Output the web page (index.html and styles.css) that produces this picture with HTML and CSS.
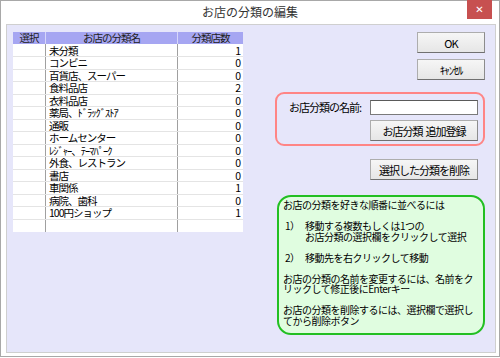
FILE: index.html
```html
<!DOCTYPE html>
<html lang="ja">
<head>
    <meta charset="UTF-8">
    <meta name="viewport" content="width=device-width, initial-scale=1.0">
    <title>お店の分類の編集</title>
    <link rel="stylesheet" href="styles.css">
</head>
<body>
    <div class="window">
        <div class="titlebar">
            <span class="title">お店の分類の編集</span>
            <button class="close-button">&#x2715;</button>
        </div>

        <div class="client">
            <table class="grid">
                <thead>
                    <tr>
                        <th class="col-select">選択</th>
                        <th class="col-name">お店の分類名</th>
                        <th class="col-count">分類店数</th>
                    </tr>
                </thead>
                <tbody>
                    <tr><td></td><td>未分類</td><td class="num">1</td></tr>
                    <tr><td></td><td>コンビニ</td><td class="num">0</td></tr>
                    <tr><td></td><td>百貨店、スーパー</td><td class="num">0</td></tr>
                    <tr><td></td><td>食料品店</td><td class="num">2</td></tr>
                    <tr><td></td><td>衣料品店</td><td class="num">0</td></tr>
                    <tr><td></td><td>薬局、ﾄﾞﾗｯｸﾞｽﾄｱ</td><td class="num">0</td></tr>
                    <tr><td></td><td>通販</td><td class="num">0</td></tr>
                    <tr><td></td><td>ホームセンター</td><td class="num">0</td></tr>
                    <tr><td></td><td>ﾚｼﾞｬｰ、ﾃｰﾏﾊﾟｰｸ</td><td class="num">0</td></tr>
                    <tr><td></td><td>外食、レストラン</td><td class="num">0</td></tr>
                    <tr><td></td><td>書店</td><td class="num">0</td></tr>
                    <tr><td></td><td>車関係</td><td class="num">1</td></tr>
                    <tr><td></td><td>病院、歯科</td><td class="num">0</td></tr>
                    <tr><td></td><td>100円ショップ</td><td class="num">1</td></tr>
                    <tr class="empty-row"><td></td><td></td><td></td></tr>
                </tbody>
            </table>

            <div class="side">
                <div class="main-buttons">
                    <button class="btn btn-small">OK</button>
                    <button class="btn btn-small">ｷｬﾝｾﾙ</button>
                </div>

                <div class="name-box">
                    <div class="name-row">
                        <label for="nameInput">お店分類の名前:</label>
                        <input type="text" id="nameInput">
                    </div>
                    <button class="btn btn-wide">お店分類&nbsp;&nbsp;追加登録</button>
                </div>

                <button class="btn btn-wide btn-delete">選択した分類を削除</button>

                <div class="help-box">
                    <p>お店の分類を好きな順番に並べるには</p>
                    <p class="step"><span class="step-no">1）</span><span>移動する複数もしくは1つの<br>お店分類の選択欄をクリックして選択</span></p>
                    <p class="step"><span class="step-no">2）</span><span>移動先を右クリックして移動</span></p>
                    <p>お店の分類の名前を変更するには、名前をク<br>リックして修正後にEnterキー</p>
                    <p>お店の分類を削除するには、選択欄で選択し<br>てから削除ボタン</p>
                </div>
            </div>
        </div>
    </div>
</body>
</html>
```

FILE: styles.css
```css
body {
    margin: 0;
    padding: 0;
    background-color: #ffffff;
    font-family: "Noto Sans CJK JP", "Noto Sans", sans-serif;
    font-size: 11px;
    color: #000000;
}

.window {
    box-sizing: border-box;
    width: 500px;
    height: 357px;
    border: 1px solid #a8a8a8;
    background-color: #ffffff;
    display: flex;
    flex-direction: column;
}

.titlebar {
    position: relative;
    height: 23px;
    text-align: center;
}

.title {
    display: inline-block;
    margin-top: 3px;
    font-size: 12px;
    line-height: 16px;
    color: #333333;
}

.close-button {
    position: absolute;
    top: -1px;
    right: 7px;
    width: 25px;
    height: 19px;
    padding: 0;
    border: none;
    background-color: #c75050;
    color: #ffffff;
    font-size: 10px;
    line-height: 19px;
    font-weight: bold;
    font-family: "DejaVu Sans", sans-serif;
}

.client {
    box-sizing: border-box;
    height: 329px;
    margin: 0 3px 0 5px;
    padding: 7px 0 0 6px;
    border: 1px solid #cfcfcf;
    background-color: #e6e6fa;
    display: flex;
    align-items: flex-start;
    gap: 32px;
    letter-spacing: -1px;
}

/* tabela */
.grid {
    width: 228px;
    border-collapse: collapse;
    table-layout: fixed;
    background-color: #ffffff;
}

.grid th {
    height: 12px;
    padding: 0;
    background-color: #a6a6f2;
    font-weight: normal;
    font-size: 10.5px;
    line-height: 12px;
    color: #202020;
    border-left: 1px solid #d6d6fa;
}

.grid th:first-child {
    border-left: none;
}

.col-select {
    width: 32px;
}

.col-name {
    width: 131px;
}

.col-count {
    width: 65px;
}

.grid td {
    height: 12.5px;
    padding: 0 3px;
    font-size: 10.5px;
    line-height: 11px;
    box-sizing: border-box;
    border-bottom: 1px solid #e4e4e4;
    border-left: 1px solid #a0a0a0;
    white-space: nowrap;
}

.grid td:first-child {
    border-left: none;
}

.grid td.num {
    text-align: right;
    padding-right: 3px;
}

.grid .empty-row td {
    border-bottom: none;
}

/* lado direito */
.side {
    width: 210px;
    display: flex;
    flex-direction: column;
    align-items: flex-start;
}

.main-buttons {
    align-self: flex-end;
    display: flex;
    flex-direction: column;
    gap: 6px;
}

.btn {
    box-sizing: border-box;
    height: 21px;
    padding: 0;
    border: 1px solid #adadad;
    border-right-color: #8c8c8c;
    border-bottom-color: #707070;
    background: linear-gradient(#f6f6f6, #e6e6e6);
    font-family: inherit;
    font-size: 11px;
    letter-spacing: -1px;
    color: #000000;
    cursor: pointer;
}

.btn-small {
    width: 68px;
}

.btn-wide {
    width: 108px;
}

.name-box {
    box-sizing: border-box;
    width: 210px;
    height: 54px;
    margin-top: 12px;
    padding: 5px 5px 0 12px;
    border: 2px solid #ff8585;
    border-radius: 9px;
    display: flex;
    flex-direction: column;
    align-items: flex-end;
    gap: 5px;
}

.name-row {
    width: 100%;
    display: flex;
    align-items: center;
    justify-content: space-between;
}

.name-row input {
    box-sizing: border-box;
    width: 108px;
    height: 15px;
    margin: 0;
    padding: 0 2px;
    border: 1px solid #7a7a7a;
    border-top-color: #5a5a5a;
    background-color: #ffffff;
}

.btn-delete {
    align-self: flex-end;
    margin-top: 13px;
    margin-right: 7px;
}

.help-box {
    box-sizing: border-box;
    width: 208px;
    height: 140px;
    margin: 15px 0 0 2px;
    padding: 3px 4px 0 4px;
    border: 2px solid #22bf22;
    border-radius: 14px;
    background-color: #e0fde0;
    font-size: 10px;
    line-height: 10.5px;
    letter-spacing: -0.5px;
}

.help-box p {
    margin: 0 0 10.5px 0;
    white-space: nowrap;
}

.step {
    display: flex;
}

.step-no {
    width: 20px;
    padding-left: 2px;
    flex-shrink: 0;
}
```
